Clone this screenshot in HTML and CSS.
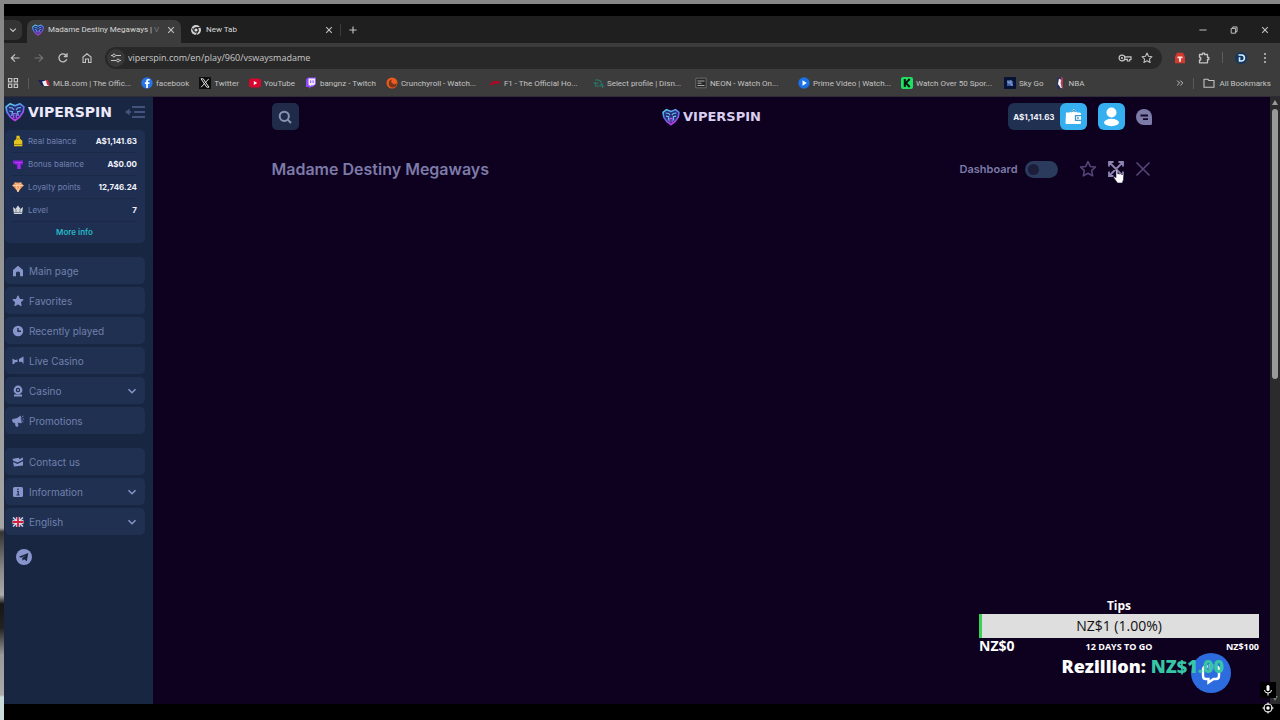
FILE: index.html
```html
<!DOCTYPE html>
<html lang="en">
<head>
<meta charset="utf-8">
<title>Madame Destiny Megaways | Viperspin</title>
<link rel="stylesheet" href="styles.css">
</head>
<body>
<svg class="defs" aria-hidden="true">
  <defs>
    <linearGradient id="viper" x1="0" y1="0" x2="0.4" y2="1"><stop offset="0" stop-color="#55dbe8"/><stop offset=".5" stop-color="#5a78f0"/><stop offset="1" stop-color="#c03bea"/></linearGradient>
    <symbol id="snake" viewBox="0 0 20 20">
      <path d="M5 1.800 10 3.800l5-2 3.900 3-.8 5.300-3.500 5L10 18.500l-4.600-3.400-3.500-5-.8-5.300z" fill="#2b2a78" stroke="url(#viper)" stroke-width="1.700" stroke-linejoin="round"/>
      <path d="M4 5.500l3.500.5L9 8M16 5.500l-3.500.5L11 8M4.300 9l3.200.7L6.800 14M15.700 9l-3.200.7.7 4.300" fill="none" stroke="#5fc3ee" stroke-width="1.200"/>
      <path d="M8.700 16v-4.500h2.600V16" fill="none" stroke="#a95cf0" stroke-width="1.200"/>
    </symbol>
    <symbol id="chev" viewBox="0 0 10 10"><path d="M1.500 3.200 5 6.700l3.500-3.500" fill="none" stroke="currentColor" stroke-width="1.500"/></symbol>
    <symbol id="cross" viewBox="0 0 10 10"><path d="M1.500 1.500l7 7m0-7l-7 7" fill="none" stroke="currentColor" stroke-width="1.300"/></symbol>
    <symbol id="star" viewBox="0 0 20 20"><path d="M10 1.800l2.500 5.300 5.800.7-4.300 4 1.200 5.800L10 14.700l-5.200 2.900L6 11.800l-4.300-4 5.800-.7z" stroke="currentColor" stroke-width="1.700" stroke-linejoin="round"/></symbol>
  </defs>
</svg>

<div class="browser">
  <div class="tabs">
    <button class="tab-search" aria-label="Search tabs"><svg class="i8"><use href="#chev"/></svg></button>
    <div class="tab active">
      <svg class="i12"><use href="#snake"/></svg><span class="tab-title">Madame Destiny Megaways | <i>V</i></span>
      <button aria-label="Close tab"><svg class="i8"><use href="#cross"/></svg></button>
    </div>
    <div class="tab">
      <svg class="i12" viewBox="0 0 12 12"><circle cx="6" cy="6" r="5" fill="#d0d0d0"/><circle cx="6" cy="6" r="2.200" fill="#ddd" stroke="#222" stroke-width="1.200"/><path d="M6 3.500h4.500M3.700 7.200 1.600 3.600M8.200 7.200 6 11" stroke="#222" stroke-width=".9"/></svg><span class="tab-title">New Tab</span>
      <button aria-label="Close tab"><svg class="i8"><use href="#cross"/></svg></button>
    </div>
    <button class="new-tab" aria-label="New tab"><svg class="i8" viewBox="0 0 10 10"><path d="M5 .5v9M.5 5h9" stroke="currentColor" stroke-width="1.400"/></svg></button>
    <div class="window-buttons">
      <button aria-label="Minimize"><svg class="i8" viewBox="0 0 10 10"><path d="M.5 5h9" stroke="currentColor" stroke-width="1.200"/></svg></button>
      <button aria-label="Restore"><svg class="i8" viewBox="0 0 10 10"><path d="M1.500 3h5.500v6H1.500zM3.500 3V1.200h5.300v6H7" fill="none" stroke="currentColor" stroke-width="1.200" stroke-linejoin="round"/></svg></button>
      <button aria-label="Close"><svg class="i8" ><use href="#cross"/></svg></button>
    </div>
  </div>

  <div class="toolbar">
    <button aria-label="Back"><svg class="i12" viewBox="0 0 12 12"><path d="M10.500 6h-8M6 2.300 2.300 6 6 9.700" fill="none" stroke="currentColor" stroke-width="1.200"/></svg></button>
    <button class="dim" aria-label="Forward"><svg class="i12" viewBox="0 0 12 12"><path d="M1.500 6h8M6 2.300 9.700 6 6 9.700" fill="none" stroke="currentColor" stroke-width="1.200"/></svg></button>
    <button aria-label="Reload"><svg class="i12" viewBox="0 0 12 12"><path d="M9.700 7.300A4 4 0 1 1 9.200 3.500M10 1.300v3.200H6.800" fill="none" stroke="currentColor" stroke-width="1.300"/></svg></button>
    <button aria-label="Home"><svg class="i12" viewBox="0 0 12 12"><path d="M2 5 6 1.800 10 5v5.500H7.500V7h-3v3.500H2z" fill="none" stroke="currentColor" stroke-width="1.100"/></svg></button>
    <div class="address">
      <button class="site-info" aria-label="Site information"><svg class="i12" viewBox="0 0 12 12"><path d="M1 3.500h2M6 3.500h5M1 8.500h5M9.500 8.500H11" stroke="currentColor" stroke-width="1.200"/><g fill="none" stroke="currentColor"><circle cx="4" cy="3.500" r="1.400"/><circle cx="8" cy="8.500" r="1.400"/></g></svg></button>
      <input type="text" aria-label="Address" value="viperspin.com/en/play/960/vswaysmadame">
      <button aria-label="Passwords"><svg class="i14" viewBox="0 0 14 14"><g fill="none" stroke="currentColor" stroke-width="1.200"><circle cx="4" cy="7" r="2.900"/><path d="M7 5.800h6v2.700h-1.300V10H9.300V8.300H7"/></g><circle cx="4" cy="7" r="1.100" fill="currentColor"/></svg></button>
      <button aria-label="Bookmark this tab"><svg class="i12"><use href="#star" fill="none"/></svg></button>
    </div>
    <div class="extensions">
      <button aria-label="Extension"><svg class="i12" viewBox="0 0 12 12"><path d="M3 .8h6l2 4v6.400H1V4.800z" fill="#d5382f"/><path d="M3.500 4.500h5v1.700H7v3.500H5V6.200H3.500z" fill="#ffe3de"/></svg></button>
      <button aria-label="Extensions"><svg class="i12" viewBox="0 0 12 12"><path d="M1.500 2.500h3V1.200h2v1.300h3v3h1.300v2H9.500v3.300h-8V8h1.200V5.500H1.500z" fill="none" stroke="currentColor" stroke-width="1.300" stroke-linejoin="round"/></svg></button>
      <span class="rule"></span>
      <button aria-label="Profile"><svg class="i12" viewBox="0 0 14 14"><circle cx="7" cy="7" r="7" fill="#14375f"/><path d="M4 3.500h3.500a3.500 3.500 0 0 1 0 7H5.300V6" fill="none" stroke="#d6efff" stroke-width="1.900"/></svg></button>
      <button aria-label="Menu"><svg class="i12" viewBox="0 0 12 12" fill="currentColor"><circle cx="6" cy="2" r="1"/><circle cx="6" cy="6" r="1"/><circle cx="6" cy="10" r="1"/></svg></button>
    </div>
  </div>

  <nav class="bookmarks" aria-label="Bookmarks">
    <button aria-label="Apps"><svg class="i12" viewBox="0 0 12 12"><path d="M1.500 1.500h3.300v3.300H1.500zM7.200 1.500h3.300v3.300H7.200zM1.500 7.200h3.300v3.300H1.500zM7.200 7.200h3.300v3.300H7.200z" fill="none" stroke="currentColor" stroke-width="1.200"/></svg></button>
    <span class="rule"></span>
    <div class="links">
      <a class="long" href="#"><svg class="i12" viewBox="0 0 12 12"><path d="M0 3h7l1 6H4z" fill="#17205a"/><path d="M7 3h3l2 6H8z" fill="#c52a40"/><path d="M4 4.500l4-1 1 4 2 1.500H6z" fill="#eee"/></svg><span>MLB.com | The Offic...</span></a>
      <a href="#"><svg class="i12" viewBox="0 0 12 12"><circle cx="6" cy="6" r="5.700" fill="#2676e8"/><path d="M6.900 11V7h1.400l.3-1.700H6.900v-1c0-.6.300-.9 1.700-.8V2.100C6.200 1.700 5.200 2.600 5.200 4v1.300H3.900V7h1.300v4z" fill="#fff"/></svg><span>facebook</span></a>
      <a href="#"><svg class="i12" viewBox="0 0 12 12"><path d="M0 0h12v12H0z" fill="#0d0d0d"/><path d="M2 1.800h2.200L10 10.200H7.800zM9.800 1.800 2.200 10.200" fill="none" stroke="#ddd"/></svg><span>Twitter</span></a>
      <a href="#"><svg class="i12" viewBox="0 0 12 12"><rect y="1.500" width="12" height="9" rx="2.500" fill="#d90630"/><path d="M4.800 4v4l3.400-2z" fill="#fff"/></svg><span>YouTube</span></a>
      <a href="#"><svg class="i12" viewBox="0 0 12 12"><path d="M1 2.500 3 .5h8v6.800L7.800 10H6l-2 1.800V10H1z" fill="#9147ff"/><path d="M3.500 1.500h6.600V7L8.700 8.200H6.500L5 9.500V8.200H3.500z" fill="#eee"/><path d="M5.700 3.300v2.800M8.100 3.300v2.800" stroke="#9147ff"/></svg><span>bangnz - Twitch</span></a>
      <a class="long" href="#"><svg class="i12" viewBox="0 0 12 12"><circle cx="6" cy="6" r="5.500" fill="#ed5a1c"/><path d="M10.700 6A4 4 0 1 1 6 2.500a2.600 2.600 0 1 0 4.700 3.500z" fill="#78351e"/></svg><span>Crunchyroll - Watch...</span></a>
      <a class="long" href="#"><svg class="i12" viewBox="0 0 12 12"><path d="M0 8l3-3.300c.6-.6 1-.7 2-.7h7L9.500 7H5L3.800 8z" fill="#a00d24"/></svg><span>F1 - The Official Ho...</span></a>
      <a class="long" href="#"><svg class="i12" viewBox="0 0 12 12"><path d="M3 3c4-.5 6.500 1 6.500 3.300S6.800 9.700 3.600 9V5M1.500 6.500c2-1 3.500-.8 5 .3M10.500 7v4M8.500 9h3.500" fill="none" stroke="#2a7167" stroke-width="1.200"/></svg><span>Select profile | Disn...</span></a>
      <a class="long" href="#"><svg class="i12" viewBox="0 0 12 12"><path d="M.8 1.200h10.400v9.600H.8z" fill="#272727" stroke="#777" stroke-width=".8"/><path d="M2.500 4h7M2.500 6.200h4M2.500 8.500h7" stroke="#aaa"/></svg><span>NEON - Watch On...</span></a>
      <a class="long" href="#"><svg class="i12" viewBox="0 0 12 12"><circle cx="6" cy="6" r="5.700" fill="#1b72e8"/><path d="M4.500 3.300v5.400L8.800 6z" fill="#fff"/></svg><span>Prime Video | Watch...</span></a>
      <a class="long" href="#"><svg class="i12" viewBox="0 0 12 12"><rect width="12" height="12" rx="2" fill="#20df63"/><path d="M3.800 2v8M8.700 2 4.800 6l3.900 4" fill="none" stroke="#07170d" stroke-width="2"/></svg><span>Watch Over 50 Spor...</span></a>
      <a href="#"><svg class="i12" viewBox="0 0 12 12"><rect width="12" height="12" rx="1" fill="#071334"/><path d="M3 4h6v5H3z" fill="#3d5aa0"/><path d="M4 3v3h2V3M7 3v5h2" fill="none" stroke="#9cb5e5" stroke-width=".8"/></svg><span>Sky Go</span></a>
      <a href="#"><svg class="i12" viewBox="0 0 12 12"><rect x="3" width="6" height="12" rx="1.500" fill="#29305e"/><path d="M7 0h.8Q9 0 9 1.500v9Q9 12 7.800 12L7 8z" fill="#b33a4d"/><path d="M5.300 2l1.500 1-.5 3 1 5-3-4z" fill="#fff" stroke="#fff" stroke-width=".7"/></svg><span>NBA</span></a>
    </div>
    <button aria-label="More bookmarks"><svg class="i8" viewBox="0 0 10 10"><path d="M1.500 2 4.500 5l-3 3M5.500 2l3 3-3 3" fill="none" stroke="currentColor" stroke-width="1.200"/></svg></button>
    <span class="rule"></span>
    <a class="all" href="#"><svg class="i12" viewBox="0 0 12 12"><path d="M1 2.200h3.700L6 3.500h5v6.700H1z" fill="none" stroke="currentColor" stroke-width="1.100" stroke-linejoin="round"/></svg><span>All Bookmarks</span></a>
  </nav>

  <div class="page">
    <aside class="sidebar">
      <div class="side-head">
        <a class="logo" href="#"><svg class="i20"><use href="#snake"/></svg><span>VIPERSPIN</span></a>
        <button aria-label="Collapse menu"><svg class="i20" viewBox="0 0 20 20"><path d="M7 5h13M9 10h11M7 15h13M1 10h5" stroke="#43527f" stroke-width="1.800"/><path d="M0 10l4.500-3.500v7z" fill="#43527f"/></svg></button>
      </div>
      <section class="balance">
        <dl>
          <div><dt><svg class="i12" viewBox="0 0 12 12"><path d="M4.500.8h3l.5 3 2.300 2v5.400H2V6l2.300-2z" fill="#e5c51d"/><path d="M2 9.500h8M4.500 4h3" stroke="#9d861d"/></svg>Real balance</dt><dd>A$1,141.63</dd></div>
          <div><dt><svg class="i12" viewBox="0 0 12 12"><path d="M1 2.500h10v4H9V11H5V7L1 5.500z" fill="#8a20df"/><path d="M3 4.500h7M7 5v6" stroke="#be35ec"/></svg>Bonus balance</dt><dd>A$0.00</dd></div>
          <div><dt><svg class="i12" viewBox="0 0 12 12"><path d="M3 1.500h6l2.500 3L6 11 .5 4.500z" fill="#ef9960"/><path d="M3 1.500l3 3 3-3M.5 4.500h11M4 4.500 6 11l2-6.500" fill="none" stroke="#ffd6af" stroke-width=".9"/></svg>Loyalty points</dt><dd>12,746.24</dd></div>
          <div><dt><svg class="i12" viewBox="0 0 12 12"><path d="M1 3l2.500 2L6 1.500 8.500 5 11 3l-1 7H2z" fill="#d4d8de"/><path d="M2 8.500h8M4 5v3M8 5v3" stroke="#818a98"/></svg>Level</dt><dd>7</dd></div>
        </dl>
        <a class="more-info" href="#">More info</a>
      </section>
      <nav class="menu" aria-label="Main">
        <a href="#"><svg class="i12" viewBox="0 0 12 12" fill="currentColor"><path d="M1 5 6 .8 11 5v6.200H8V7.500q-2-2-4 0v3.700H1z"/></svg>Main page</a>
        <a href="#"><svg class="i12" fill="currentColor"><use href="#star"/></svg>Favorites</a>
        <a href="#"><svg class="i12" viewBox="0 0 12 12"><circle cx="6" cy="6" r="5.200" fill="currentColor"/><path d="M6 3v3.300h3" fill="none" stroke="#1f2f50" stroke-width="1.400"/></svg>Recently played</a>
        <a href="#"><svg class="i12" viewBox="0 0 12 12" fill="currentColor"><path d="M.5 3.500 3 5l2.500-.5V7L3 7.200 2.200 9H.5zM7 4l4.500-2.500V9L9.800 6.800 7 7z"/></svg>Live Casino</a>
        <button><svg class="i12" viewBox="0 0 12 12"><circle cx="6" cy="5" r="3.300" fill="none" stroke="currentColor" stroke-width="2.200"/><circle cx="6" cy="5" r="1" fill="currentColor"/><path d="M2 9.500h8v2H2z" fill="currentColor"/></svg>Casino<svg class="i10 arrow"><use href="#chev"/></svg></button>
        <a href="#"><svg class="i12" viewBox="0 0 12 12" fill="currentColor"><path d="M.5 4.500 5 3.500 8.500 1l.8 7-3.800-.8.5 4H4L3 7.500l-2-.2zM10 2l1.500-1M10.300 4H12M10 6l1.500 1" stroke="currentColor" stroke-width=".7"/></svg>Promotions</a>
      </nav>
      <nav class="menu" aria-label="Support">
        <a href="#"><svg class="i12" viewBox="0 0 12 12" fill="currentColor"><path d="M.8 2.800l6-1 .5 1.500L11 1.500v2.300L5.500 6.500.8 4.500zM1 6l4.500 2L11 5.300v4.200L2 10.500z"/></svg>Contact us</a>
        <button><svg class="i12" viewBox="0 0 12 12"><rect x="1" y="1" width="10" height="10" rx="1.500" fill="currentColor"/><path d="M6 2.500v1.700M5 5.500h1.200v3.700M4.500 9h3" stroke="#1f2f50" stroke-width="1.200" fill="none"/></svg>Information<svg class="i10 arrow"><use href="#chev"/></svg></button>
        <button><svg class="i12" viewBox="0 0 12 12"><rect x=".5" y="1" width="11" height="10" rx="2" fill="#29457e"/><path d="M1 1.500l10 9M11 1.500l-10 9" stroke="#ddd" stroke-width="1.200"/><path d="M6 1v10M.5 6h11" stroke="#eee" stroke-width="3.400"/><path d="M6 1v10M.5 6h11" stroke="#d51f43" stroke-width="1.900"/></svg>English<svg class="i10 arrow"><use href="#chev"/></svg></button>
      </nav>
      <a class="telegram" href="#" aria-label="Telegram"><svg class="i16" viewBox="0 0 16 16"><circle cx="8" cy="8" r="8" fill="#8795cc"/><path d="M2.800 7.800 12.300 4l-1.500 8.300-2.700-2-1.500 1.500-.4-2.700 3.600-2.800-4.700 2.500z" fill="#182642"/></svg></a>
    </aside>

    <main class="content">
      <header class="top">
        <button class="search" aria-label="Search"><svg class="i14" viewBox="0 0 14 14"><path d="M9.500 9.500 13 13" stroke="currentColor" stroke-width="2"/><circle cx="6.300" cy="6.300" r="4.600" fill="none" stroke="currentColor" stroke-width="2"/></svg></button>
        <a class="logo small" href="#"><svg class="i18"><use href="#snake"/></svg><span>VIPERSPIN</span></a>
        <div class="account">
          <button class="wallet"><span>A$1,141.63</span><svg class="i27" viewBox="0 0 27 27"><rect width="27" height="27" rx="6" fill="#36aff0"/><path d="M6 9.500h3.500L14 6l3 3.500h2.500q1.500 0 1.500 1.500v9q0 1-1 1H6.500Q5.500 21 5.500 20z" fill="#fff"/><path d="M11 9l3-1.600L15.500 9M21 12.700h-5.500v4.600H21" fill="none" stroke="#4294cd" stroke-width="1.300"/><circle cx="18" cy="15" r=".9" fill="#4294cd"/></svg></button>
          <button aria-label="Profile"><svg class="i27" viewBox="0 0 27 27"><rect width="27" height="27" rx="6" fill="#36aff0"/><circle cx="13.500" cy="9.500" r="5" fill="#fff"/><ellipse cx="13.500" cy="19.500" rx="7.500" ry="3.700" fill="#fff"/></svg></button>
          <button aria-label="Messages"><svg class="i16" viewBox="0 0 16 16"><path d="M8 0a8 8 0 0 1 8 8v6.500q0 1.500-1.500 1.500H8A8 8 0 0 1 8 0z" fill="#7c7ba8"/><path d="M4.500 6.500H12M7 10.200h5" stroke="#160728" stroke-width="1.800"/></svg></button>
        </div>
      </header>
      <div class="game-bar">
        <h1>Madame Destiny Megaways</h1>
        <label for="dash">Dashboard</label><input id="dash" class="toggle" type="checkbox">
        <div class="game-actions">
          <button aria-label="Add to favorites"><svg class="i18"><use href="#star" fill="none"/></svg></button>
          <button class="expand" aria-label="Full screen"><svg class="i16" viewBox="0 0 16 16"><path d="M5.500 1H1v4.500M10.500 1H15v4.500M5.500 15H1v-4.500M10.500 15H15v-4.500M2 2l12 12M14 2 2 14" fill="none" stroke="#8d86b4" stroke-width="1.800"/></svg>
            <svg class="cursor" viewBox="0 0 12 16"><path d="M3 1.300q1-1 1.800 0V6q1-.8 1.800 0 1.300-.7 1.900.5 1.700-.5 2 .9v4L9.300 15H4.500L.8 9.800q0-1.500 1.200-1L3 9.800z" fill="#fff" stroke="#221a3b" stroke-width=".6"/></svg></button>
          <button aria-label="Close game"><svg class="i16" viewBox="0 0 16 16"><path d="M1.500 1.500l13 13m0-13l-13 13" stroke="#53477a" stroke-width="1.600"/></svg></button>
        </div>
      </div>
    </main>
    <div class="scrollbar" aria-hidden="true"><i class="up"></i><i class="thumb"></i><i class="down"></i></div>
  </div>
</div>

<button class="chat" aria-label="Open chat"><svg class="i24" viewBox="0 0 24 24"><path d="M9 5.500H6.500Q4 6 4 9v6q0 3 3 3h2.500v3.500l5-3.500H17q3 0 3-3V9q0-3-2.500-3.500" fill="none" stroke="#fff" stroke-width="2.400"/><path d="M9.500 3h5v5.500h-5z" fill="#7fb0ea"/></svg></button>
<section class="goal">
  <div class="goal-title">Tips</div>
  <div class="goal-bar">NZ$1 (1.00%)</div>
  <div class="goal-foot"><b>NZ$0</b><span>12 DAYS TO GO</span><span>NZ$100</span></div>
  <div class="donor">Rezillion: <span>NZ$1.00</span></div>
</section>
<div class="recorder" aria-hidden="true">
  <svg class="i16" viewBox="0 0 16 16"><path d="M0 0h16v16H0z" fill="#000"/><rect x="6.500" y="3" width="3" height="6" rx="1.500" fill="#fff"/><path d="M4.500 8q0 3 3.500 3t3.500-3M8 11v2.500" fill="none" stroke="#fff"/></svg>
  <svg class="i12" viewBox="0 0 12 12"><circle cx="6" cy="6" r="4" fill="none" stroke="#fff" stroke-width="1.100"/><circle cx="6" cy="6" r="1.700" fill="#fff"/><path d="M6 .5V3M6 9v2.500M.5 6H3M9 6h2.500" stroke="#fff"/></svg>
</div>
</body>
</html>
```

FILE: styles.css
```css
* { box-sizing: border-box; }
body {
  margin: 0;
  min-height: 100vh;
  display: flex;
  padding: 4px 0 0 4px;
  background: linear-gradient(#868686 0, #a5a5a5 528px, #333 532px, #8a8a8a 570px, #aaa 595px, #161616 604px, #222 628px, #999 655px, #aaa 695px, #cbdcdd 697px);
  font-family: Inter, "Liberation Sans", sans-serif;
}
button { border: 0; padding: 0; background: none; color: inherit; font: inherit; display: flex; align-items: center; justify-content: center; cursor: pointer; }
a { color: inherit; text-decoration: none; }
svg { display: block; flex: none; overflow: visible; }
.defs { position: absolute; width: 0; height: 0; }
.i8 { width: 8px; height: 8px; }
.i10 { width: 10px; height: 10px; }
.i12 { width: 12px; height: 12px; }
.i14 { width: 14px; height: 14px; }
.i16 { width: 16px; height: 16px; }
.i18 { width: 18px; height: 18px; }
.i20 { width: 20px; height: 20px; }
.i24 { width: 24px; height: 24px; }
.i27 { width: 27px; height: 27px; }

/* Browser chrome */
.browser { flex: 1; min-width: 0; display: flex; flex-direction: column; padding: 12px 0 16px; background: #000; }
.tabs, .toolbar, .bookmarks { display: flex; align-items: center; color: #c4c4c4; font-family: Roboto, "Noto Sans", sans-serif; font-size: 8px; }
.tabs { height: 27px; background: #1f1f1f; }
.tab-search { width: 18px; height: 20px; border-radius: 0 6px 6px 0; background: #343434; }
.tab { display: flex; align-items: center; gap: 4px; height: 23px; width: 158px; padding: 0 6px 4px 9px; align-self: flex-end; }
.tab.active { margin-left: 5px; padding: 0 6px 4px 5px; width: 154px; background: #3c3c3c; border-radius: 7px 7px 0 0; }
.tab-title { flex: 1; white-space: nowrap; color: #d8d8d8; }
.tab-title i { font-style: normal; color: #777; }
.new-tab { border-left: 1px solid #3c3c3c; padding-left: 8px; margin-left: 1px; height: 12px; }
.window-buttons { display: flex; gap: 23px; margin-left: auto; padding-right: 11px; }
.toolbar { height: 29px; padding: 0 10px 0 5px; gap: 12px; background: #3c3c3c; }
.dim { opacity: .4; }
.address { flex: 1; display: flex; align-items: center; height: 22px; padding: 0 9px 0 2px; gap: 9px; border-radius: 11px; background: #282828; }
.site-info { width: 18px; height: 18px; border-radius: 9px; background: #383838; }
.address input { flex: 1; min-width: 0; padding: 0; margin-left: -6px; border: 0; outline: 0; background: none; color: #c8c8c8; font: 9px "Open Sans", "Noto Sans", sans-serif; }
.extensions { display: flex; align-items: center; gap: 12px; margin-right: -1px; }
.rule { width: 1px; height: 11px; flex: none; background: #5b5b5b; }
.bookmarks { height: 25px; padding: 0 9px 2px 3px; background: #3c3c3c; border-bottom: 1px solid #302c37; }
.bookmarks > .rule { margin: 0 9px; }
.links { flex: 1; min-width: 0; display: flex; gap: 10px; }
.links a, .all { display: flex; align-items: center; gap: 3px; white-space: nowrap; }
.links .long { width: 93px; }
.all { gap: 4px; }

/* Page */
.page { flex: 1; display: flex; background: #0e001f; }
.sidebar { width: 149px; flex: none; background: #182642; color: #7180ae; font-size: 10px; padding: 5px 8px 0 1px; }
.side-head { display: flex; justify-content: space-between; align-items: center; height: 20px; }
.logo { display: flex; align-items: center; gap: 3px; color: #eceafa; font: bold 14px "DejaVu Sans", sans-serif; }
.logo.small { font-size: 13px; color: #d9cff0; }
.balance { margin: 8px 0 14px; padding: 0 8px 0 7px; border-radius: 5px; background: #1f2f52; }
dl { margin: 0; font-size: 8px; }
dl div { display: flex; justify-content: space-between; align-items: center; height: 23px; border-bottom: 1px solid #1b2947; }
dt { display: flex; align-items: center; gap: 4px; }
dd { margin: 0; font-weight: 700; color: #f0f2fa; }
.more-info { display: block; height: 21px; line-height: 21px; text-align: center; font-size: 8px; font-weight: 600; color: #27b6c4; }
.menu { display: grid; gap: 3px; margin-bottom: 14px; }
.menu a, .menu button { display: flex; align-items: center; justify-content: flex-start; gap: 5px; height: 27px; width: 100%; padding: 0 8px 0 7px; border-radius: 5px; background: #203050; }
.menu a > svg, .menu button > svg { color: #8795cc; }
.menu .arrow { margin-left: auto; }
.telegram { display: inline-block; padding-left: 11px; }

.content { flex: 1; min-width: 0; padding: 6px 16px; color: #7c7ba8; }
.top, .game-bar { max-width: 880px; margin: 0 auto; }
.top { display: grid; grid-template-columns: 1fr auto 1fr; align-items: center; }
.search { width: 27px; height: 27px; border-radius: 5px; background: #202b4a; color: #8792b5; }
.account { display: flex; align-items: center; justify-content: flex-end; gap: 11px; }
.wallet { background: #203050; border-radius: 6px; padding-left: 5px; gap: 5px; color: #f0f2fa; font-size: 8px; font-weight: 700; }
.game-bar { display: flex; align-items: center; margin-top: 26px; }
h1 { flex: 1; margin: 0; font-size: 16px; line-height: 26px; font-weight: 600; }
label { font-size: 11px; font-weight: 600; }
.toggle { appearance: none; width: 33px; height: 17px; margin: 0 21px 0 7px; padding: 3px; border-radius: 9px; background: #2a3b5d; }
.toggle::before { content: ""; display: block; width: 11px; height: 11px; border-radius: 50%; background: #1d1d3b; }
.game-actions { display: flex; align-items: center; gap: 11px; padding-right: 1px; color: #53477a; }
.expand { position: relative; }
.cursor { position: absolute; left: 5px; top: 7px; width: 12px; height: 16px; }

.scrollbar { width: 10px; flex: none; display: flex; flex-direction: column; align-items: center; padding: 3px 0; background: #2b2b2b; }
.up, .down { border: 3px solid transparent; }
.up { border-bottom: 5px solid #9a9a9a; border-top: 0; }
.down { border-top: 5px solid #777; border-bottom: 0; margin-top: auto; }
.thumb { width: 6px; height: 45%; margin-top: 4px; border-radius: 3px; background: #999; }

/* Stream overlay */
.goal { position: absolute; right: 21px; bottom: 42px; width: 280px; color: #fff; font-family: "Open Sans", "Noto Sans", sans-serif; }
.goal-title { text-align: center; font-size: 12px; line-height: 16px; font-weight: 700; }
.goal-bar { height: 24px; line-height: 24px; padding-right: 3px; text-align: center; font-size: 14px; color: #111; background: #dedede; border-left: 3px solid #39d353; }
.goal-foot { display: grid; grid-template-columns: 1fr auto 1fr; align-items: center; height: 16px; font-size: 9px; font-weight: 700; }
.goal-foot b { font-size: 14px; line-height: 16px; font-weight: 700; }
.goal-foot span:last-child { text-align: right; }
.donor { padding-right: 35px; text-align: right; font-size: 18px; line-height: 24px; font-weight: 800; }
.donor span { color: #36c6a5; }
.chat { position: absolute; right: 49px; bottom: 27px; width: 40px; height: 40px; border-radius: 50%; background: #2d6cdf; }
.recorder { position: absolute; right: 4px; bottom: 6px; display: grid; justify-items: center; gap: 4px; }
```
